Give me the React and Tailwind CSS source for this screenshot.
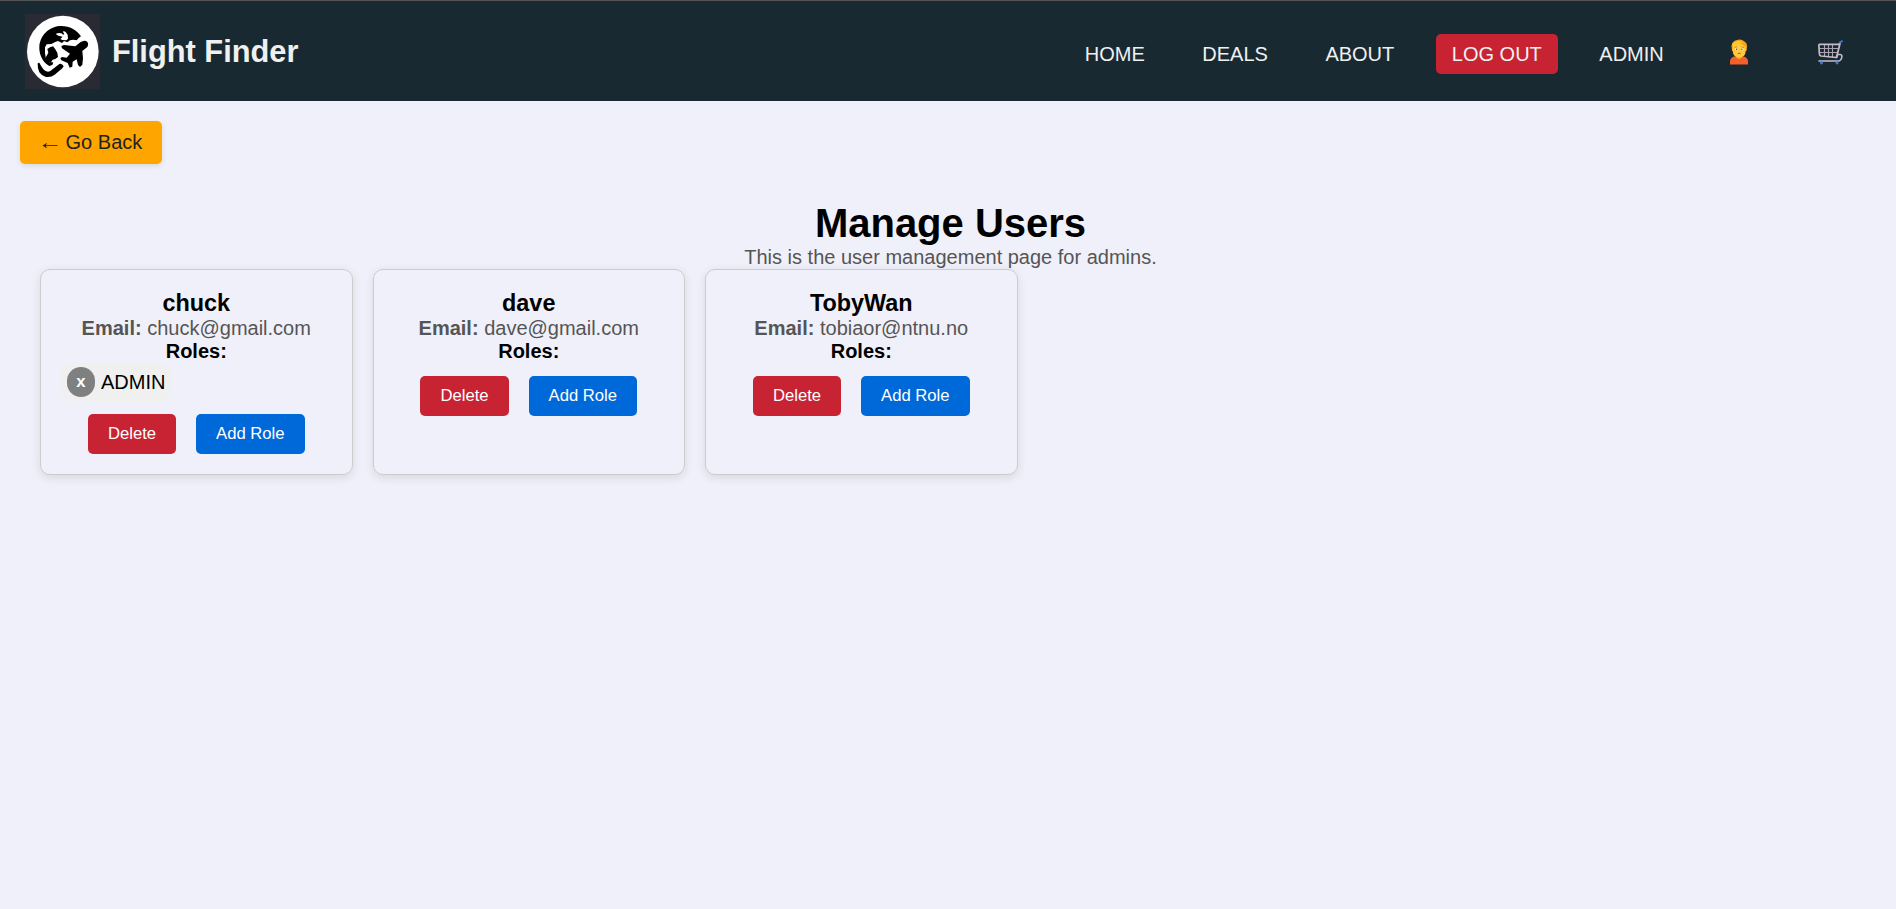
const navItem = "flex h-10 items-center rounded-[5px] px-[16.25px] text-[#f0f0f0]";

function Logo() {
  return (
    <svg className="h-[75px] w-[75px] shrink-0" viewBox="15 12 225 225">
      <rect x="15" y="12" width="225" height="225" fill="#2a2a35" />
      <circle cx="128.500" cy="124.500" r="107.500" fill="#fff" />
      <path
        d="M80 163 C64 148 57 128 58 110 C61 72 92 48 124 48 C149 48 170 59 183 79 L176 84 L170 91 L160 89 L150 91 L142 97 L132 93 L126 99 L114 93 L104 97 L94 102 L80 103 L75 112 L75 130 L78 147 L87 157 L100 157 L97 165 L88 168 Z"
        fill="#000"
      />
      <path
        d="M80 137 L85 128 L82 117 L90 112 L99 109 L105 116 L112 128 L114 141 L106 147 L98 149 L92 158 L83 155 L76 145 Z"
        fill="#000"
      />
      <path
        d="M107 72 Q116 67 124 70 L130 74 L133 72 L129 66 L131 63 L137 66 L143 74 L144 86 L139 91 L127 90 L121 87 L128 80 L115 77 Z"
        fill="#fff"
      />
      <path
        d="M181 97 Q190 91 198 93 Q206 97 204 106 L202 111 L187 123 L189 145 L187 164 L180 171 L174 165 L170 148 L158 155 L157 170 L149 173 L143 159 L124 151 L121 145 L126 141 L140 143 L150 131 L126 115 L124 108 L132 105 L166 109 Z"
        fill="#000"
      />
      <path d="M53 160 L58 158 Q64 170 70 178 Q79 188 90 184 L118 162 Q126 159 131 169 L127 175 L104 194 Q92 203 76 200 Q64 196 58 187 Q52 174 53 160 Z" fill="#000" />
    </svg>
  );
}

function PersonIcon() {
  return (
    <svg className="h-[26px] w-[18px]" viewBox="0 0 18 26">
      <path d="M0 25.500 V22 Q.5 18.500 4 17.500 L6.500 17 H12 L15 18 Q18 19.500 18 22.500 V25.500 Z" fill="#f4602a" />
      <path d="M6 15 H12 V18 Q9 22 6 18 Z" fill="#f5b21c" />
      <path d="M1.500 7 Q2 2 7 1 Q11-.5 14.500 2.500 Q17.500 4 17 8 L16.500 12 H2 Z" fill="#f3a51c" />
      <path d="M3 8 Q7 7 9 4.500 Q13 5 15.700 8 V12 Q15.500 18 9.300 18.500 Q3 18 2.700 12 Z" fill="#ffc83d" />
      <path d="M2 5 Q7 0 13 3 L8 6 L3 9 Z" fill="#fdc72c" />
      <ellipse cx="6.300" cy="10.300" rx="1.300" ry="1" fill="#fff" />
      <ellipse cx="12.200" cy="10.300" rx="1.300" ry="1" fill="#fff" />
      <circle cx="6.600" cy="10.300" r=".7" fill="#5b3a32" />
      <circle cx="11.900" cy="10.300" r=".7" fill="#5b3a32" />
      <path d="M4.500 8.600 L7 7.800 M11.500 7.800 L14 8.600" stroke="#d67d18" strokeWidth=".8" />
      <path d="M7.800 14.700 Q9.200 13.700 10.700 14.700" fill="none" stroke="#b8501f" strokeWidth="1" />
    </svg>
  );
}

function CartIcon() {
  return (
    <svg className="h-[25px] w-[25px]" viewBox="0 0 25 25" fill="none" strokeLinecap="round" strokeLinejoin="round">
      <path d="M2 8.500 H20 M2 12.500 H19 M6.500 4.500 V16 M10.500 4.500 V16 M14.500 4.500 V17" stroke="#aaa4b0" strokeWidth="1.100" />
      <path d="M22 3.500 L20.500 4.300 H1.500 Q.8 4.300 .9 6 L1.400 14 Q1.500 15.800 3 16 L18.500 17.500 L22 3.500" stroke="#c4bdc9" strokeWidth="1.700" />
      <path d="M18.500 17.500 L19.500 14.500 H22 Q24 14.500 23.900 16.500 Q23.500 20.500 20.500 21 H1" stroke="#c4bdc9" strokeWidth="1.600" />
      <path d="M22 2.400 L24 1.200" stroke="#3e78c9" strokeWidth="2" />
      <circle cx="3.500" cy="22.800" r="1.600" fill="#3e78c9" />
      <circle cx="19" cy="22.800" r="1.600" fill="#3e78c9" />
    </svg>
  );
}

const users = [
  { name: "chuck", email: "chuck@gmail.com", roles: ["ADMIN"] },
  { name: "dave", email: "dave@gmail.com", roles: [] },
  { name: "TobyWan", email: "tobiaor@ntnu.no", roles: [] },
];

function UserCard({ user }) {
  return (
    <article className="flex w-[312.5px] flex-col rounded-[10px] border border-[#ccc] p-5 text-center shadow-[0_2.5px_10px_rgba(0,0,0,0.1)]">
      <h2 className="pb-px text-[23.4px] leading-[26px] font-bold">{user.name}</h2>
      <p className="leading-[23px] text-[#555]">
        <strong>Email:</strong> {user.email}
      </p>
      <h3 className="leading-[23px] font-bold">Roles:</h3>
      {user.roles.map((role) => (
        <div key={role} className="flex pb-[0.5px]">
          <span className="flex h-[37.5px] items-center gap-1.5 rounded-[10px] bg-[#f0f0f0] pr-1.5 pl-1.5">
            <button className="flex h-[30px] w-7 items-center justify-center rounded-full bg-[#808080] pt-0.5 text-[16.67px] leading-none font-bold text-white">
              x
            </button>
            <span className="pt-px">{role}</span>
          </span>
        </div>
      ))}
      <div className="mt-[12.5px] flex justify-center gap-5 pb-[0.5px] text-[16.67px] leading-5 text-white">
        <button className="h-10 rounded-[5px] bg-[#c82333] px-5">Delete</button>
        <button className="h-10 rounded-[5px] bg-[#0069d9] px-5">Add Role</button>
      </div>
    </article>
  );
}

export default function App() {
  return (
    <div className="min-h-screen bg-[#f0f0fa] font-['Liberation_Sans',Arial,sans-serif] text-xl leading-[23px] text-black">
      <header className="flex h-[101px] items-center justify-between border-t border-[#555] bg-[#192932] pr-8 pl-[25px]">
        <div className="flex items-center gap-3">
          <Logo />
          <span className="text-[30.8px] leading-[35px] font-bold text-[#f0f0f0]">Flight Finder</span>
        </div>
        <nav className="flex items-center gap-[25px] pt-[6px]">
          <a className={navItem}>HOME</a>
          <a className={navItem}>DEALS</a>
          <a className={navItem}>ABOUT</a>
          <button className="h-10 rounded-[5px] bg-[#c82333] px-[16.25px] text-[#f0f0f0]">LOG OUT</button>
          <a className={navItem}>ADMIN</a>
          <a className="flex w-[67px] justify-center pb-1"><PersonIcon /></a>
          <a className="flex w-[67px] justify-center pb-1"><CartIcon /></a>
        </nav>
      </header>
      <div className="flex px-5 pt-5">
        <button className="h-[43px] rounded-[5px] bg-[#ffa500] px-5 text-[#222] shadow-[0_2px_5px_rgba(0,0,0,0.1)]">
          <span className="inline-block scale-x-[1.25] leading-none font-light">←</span> Go Back
        </button>
      </div>
      <main className="pt-9 pr-[35px] pl-10">
        <div className="text-center">
          <h1 className="text-[40px] leading-[46px] font-bold">Manage Users</h1>
          <p className="text-[#555]">This is the user management page for admins.</p>
        </div>
        <section className="flex gap-5">
          {users.map((user) => (
            <UserCard key={user.name} user={user} />
          ))}
        </section>
      </main>
    </div>
  );
}
